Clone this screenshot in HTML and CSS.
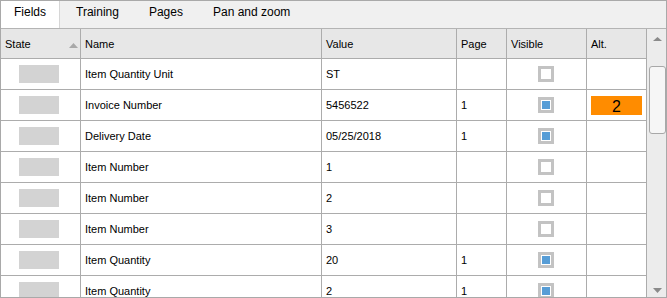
FILE: index.html
```html
<!DOCTYPE html>
<html lang="en">
<head>
    <meta charset="UTF-8">
    <title>Fields</title>
    <link rel="stylesheet" href="styles.css">
</head>
<body>
    <div class="panel">
        <div class="tabs">
            <span class="tab active">Fields</span>
            <span class="tab">Training</span>
            <span class="tab">Pages</span>
            <span class="tab">Pan and zoom</span>
        </div>

        <div class="grid-area">
            <div class="grid">
                <div class="row head">
                    <div class="cell">State
                        <svg class="sort" width="9" height="5" viewBox="0 0 9 5"><polygon points="0,5 4.5,0 9,5" fill="#a9a9a9"/></svg>
                    </div>
                    <div class="cell">Name</div>
                    <div class="cell">Value</div>
                    <div class="cell">Page</div>
                    <div class="cell">Visible</div>
                    <div class="cell">Alt.</div>
                </div>

                <div class="rows">
                    <div class="row">
                        <div class="cell state"><span class="state-box"></span></div>
                        <div class="cell">Item Quantity Unit</div>
                        <div class="cell">ST</div>
                        <div class="cell"></div>
                        <div class="cell check"><span class="box"></span></div>
                        <div class="cell alt"></div>
                    </div>
                    <div class="row">
                        <div class="cell state"><span class="state-box"></span></div>
                        <div class="cell">Invoice Number</div>
                        <div class="cell">5456522</div>
                        <div class="cell">1</div>
                        <div class="cell check"><span class="box on"></span></div>
                        <div class="cell alt"><span class="alt-badge">2</span></div>
                    </div>
                    <div class="row">
                        <div class="cell state"><span class="state-box"></span></div>
                        <div class="cell">Delivery Date</div>
                        <div class="cell">05/25/2018</div>
                        <div class="cell">1</div>
                        <div class="cell check"><span class="box on"></span></div>
                        <div class="cell alt"></div>
                    </div>
                    <div class="row">
                        <div class="cell state"><span class="state-box"></span></div>
                        <div class="cell">Item Number</div>
                        <div class="cell">1</div>
                        <div class="cell"></div>
                        <div class="cell check"><span class="box"></span></div>
                        <div class="cell alt"></div>
                    </div>
                    <div class="row">
                        <div class="cell state"><span class="state-box"></span></div>
                        <div class="cell">Item Number</div>
                        <div class="cell">2</div>
                        <div class="cell"></div>
                        <div class="cell check"><span class="box"></span></div>
                        <div class="cell alt"></div>
                    </div>
                    <div class="row">
                        <div class="cell state"><span class="state-box"></span></div>
                        <div class="cell">Item Number</div>
                        <div class="cell">3</div>
                        <div class="cell"></div>
                        <div class="cell check"><span class="box"></span></div>
                        <div class="cell alt"></div>
                    </div>
                    <div class="row">
                        <div class="cell state"><span class="state-box"></span></div>
                        <div class="cell">Item Quantity</div>
                        <div class="cell">20</div>
                        <div class="cell">1</div>
                        <div class="cell check"><span class="box on"></span></div>
                        <div class="cell alt"></div>
                    </div>
                    <div class="row">
                        <div class="cell state"><span class="state-box"></span></div>
                        <div class="cell">Item Quantity</div>
                        <div class="cell">2</div>
                        <div class="cell">1</div>
                        <div class="cell check"><span class="box on"></span></div>
                        <div class="cell alt"></div>
                    </div>
                </div>
            </div>

            <div class="scrollbar">
                <div class="sb-btn up">
                    <svg width="9" height="4" viewBox="0 0 9 4"><polygon points="0,4 4.5,0 9,4" fill="#8a8a8a"/></svg>
                </div>
                <div class="sb-thumb"></div>
                <div class="sb-track"></div>
                <div class="sb-btn down">
                    <svg width="9" height="5" viewBox="0 0 9 5"><polygon points="0,0 9,0 4.5,5" fill="#8a8a8a"/></svg>
                </div>
            </div>
        </div>
    </div>
</body>
</html>
```

FILE: styles.css
```css
body {
    margin: 0;
    font-family: "Liberation Sans", Arial, sans-serif;
    background-color: white;
    color: #000;
}
.panel {
    width: 667px;
    height: 298px;
    box-sizing: border-box;
    border: 1px solid #a9a9a9;
    display: flex;
    flex-direction: column;
    overflow: hidden;
}

/* tabs */
.tabs {
    display: flex;
    height: 28px;
    box-sizing: border-box;
    background-color: #f0f0f0;
    border-bottom: 1px solid #b4b4b4;
    flex-shrink: 0;
}
.tab {
    font-size: 12px;
    line-height: 23px;
    padding: 0 15px 4px 15px;
    color: #000;
}
.tab.active {
    background-color: white;
    padding: 0 13px 4px 13px;
    border-right: 1px solid #d6d6d6;
    margin-right: 1px;
}

/* grid */
.grid-area {
    flex: 1;
    display: flex;
    min-height: 0;
}
.grid {
    width: 646px;
    display: flex;
    flex-direction: column;
}
.row {
    display: grid;
    grid-template-columns: 80px 241px 135px 50px 80px 60px;
    height: 31px;
}
.row.head {
    height: 30px;
    background-color: #e7e7e7;
    flex-shrink: 0;
}
.rows {
    flex: 1;
    overflow: hidden;
    background-color: white;
}
.cell {
    box-sizing: border-box;
    border-right: 1px solid #acacac;
    border-bottom: 1px solid #acacac;
    padding-left: 4px;
    font-size: 11px;
    display: flex;
    align-items: center;
    white-space: nowrap;
    overflow: hidden;
}
.head .cell:first-child {
    justify-content: space-between;
    padding-right: 2px;
}
.sort {
    margin-top: 4px;
}
.cell.state {
    padding-left: 18px;
}
.state-box {
    width: 40px;
    height: 18px;
    background-color: #d3d3d3;
    margin-top: -1px;
}
.cell.check {
    justify-content: center;
    padding-left: 0;
    padding-right: 1px;
}
.box {
    width: 16px;
    height: 16px;
    box-sizing: border-box;
    border: 3px solid #c3c3c3;
    background-color: white;
    display: flex;
    align-items: center;
    justify-content: center;
}
.box.on::after {
    content: "";
    width: 8px;
    height: 8px;
    background-color: #579dd6;
}
.cell.alt {
    padding: 0 4px;
}
.alt-badge {
    width: 51px;
    height: 19px;
    box-sizing: border-box;
    padding-top: 3px;
    background-color: #ff8c00;
    font-size: 16px;
    line-height: 16px;
    text-align: center;
}

/* scrollbar */
.scrollbar {
    width: 19px;
    background-color: #ececec;
    display: flex;
    flex-direction: column;
}
.sb-btn {
    display: flex;
    align-items: center;
    justify-content: center;
    padding-left: 2px;
}
.sb-btn.up {
    height: 20px;
}
.sb-btn.down {
    height: 14px;
}
.sb-thumb {
    margin: 17px 0 0 2px;
    height: 68px;
    box-sizing: border-box;
    border: 1px solid #a8a8a8;
    border-radius: 3px;
    background-color: #f6f6f6;
}
.sb-track {
    flex: 1;
}
```
